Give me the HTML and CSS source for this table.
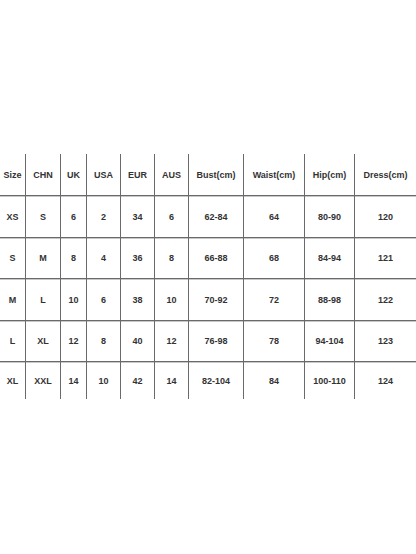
FILE: index.html
```html
<!DOCTYPE html>
<html>
<head>
<meta charset="utf-8">
<link rel="stylesheet" href="styles.css">
</head>
<body>
<div class="chart">
  <div class="row head">
    <div class="cell">Size</div><div class="cell">CHN</div><div class="cell">UK</div><div class="cell">USA</div><div class="cell">EUR</div><div class="cell">AUS</div><div class="cell">Bust(cm)</div><div class="cell">Waist(cm)</div><div class="cell">Hip(cm)</div><div class="cell">Dress(cm)</div>
  </div>
  <div class="row tall">
    <div class="cell">XS</div><div class="cell">S</div><div class="cell">6</div><div class="cell">2</div><div class="cell">34</div><div class="cell">6</div><div class="cell">62-84</div><div class="cell">64</div><div class="cell">80-90</div><div class="cell">120</div>
  </div>
  <div class="row">
    <div class="cell">S</div><div class="cell">M</div><div class="cell">8</div><div class="cell">4</div><div class="cell">36</div><div class="cell">8</div><div class="cell">66-88</div><div class="cell">68</div><div class="cell">84-94</div><div class="cell">121</div>
  </div>
  <div class="row tall">
    <div class="cell">M</div><div class="cell">L</div><div class="cell">10</div><div class="cell">6</div><div class="cell">38</div><div class="cell">10</div><div class="cell">70-92</div><div class="cell">72</div><div class="cell">88-98</div><div class="cell">122</div>
  </div>
  <div class="row">
    <div class="cell">L</div><div class="cell">XL</div><div class="cell">12</div><div class="cell">8</div><div class="cell">40</div><div class="cell">12</div><div class="cell">76-98</div><div class="cell">78</div><div class="cell">94-104</div><div class="cell">123</div>
  </div>
  <div class="row last">
    <div class="cell">XL</div><div class="cell">XXL</div><div class="cell">14</div><div class="cell">10</div><div class="cell">42</div><div class="cell">14</div><div class="cell">82-104</div><div class="cell">84</div><div class="cell">100-110</div><div class="cell">124</div>
  </div>
</div>
</body>
</html>
```
FILE: styles.css
```css
html, body {
  margin: 0;
  padding: 0;
  background: #ffffff;
}
body {
  width: 416px;
  height: 554px;
  overflow: hidden;
  font-family: "Liberation Sans", Arial, sans-serif;
}
.chart {
  padding-top: 154px;
}
.row {
  display: grid;
  grid-template-columns: 25px 35px 26px 34px 34px 34px 55px 61px 50px 62px;
  height: 40px;
  border-bottom: 1px solid #6a6a6a;
  box-shadow: 0 1px 0 #c8c8c8;
}
.row.tall,
.row.head {
  height: 41px;
}
.row.last {
  height: 37px;
  border-bottom: none;
  box-shadow: none;
}
.cell {
  display: flex;
  align-items: center;
  justify-content: center;
  font-size: 9px;
  font-weight: bold;
  color: #333333;
  white-space: nowrap;
  border-left: 1px solid #6a6a6a;
}
.cell:first-child {
  border-left: none;
}
```
